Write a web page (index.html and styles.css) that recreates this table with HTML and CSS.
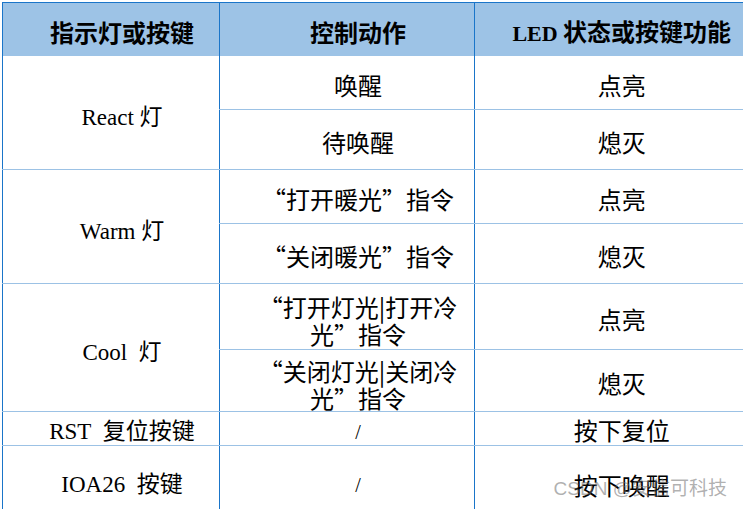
FILE: index.html
```html
<!DOCTYPE html>
<html lang="zh-CN">
<head>
<meta charset="utf-8">
<title>指示灯或按键</title>
<link rel="stylesheet" href="styles.css">
</head>
<body>
<div class="page">
  <table class="grid">
    <colgroup>
      <col class="c1"><col class="c2"><col class="c3">
    </colgroup>
    <thead>
      <tr class="head">
        <th class="sh">指示灯或按键</th>
        <th class="sh">控制动作</th>
        <th><span class="lat">LED</span> 状态或按键功能</th>
      </tr>
    </thead>
    <tbody>
      <tr class="r1">
        <td class="name grp sh" rowspan="2"><span class="lat">React</span> 灯</td>
        <td class="sh">唤醒</td>
        <td>点亮</td>
      </tr>
      <tr class="r2">
        <td class="sh">待唤醒</td>
        <td>熄灭</td>
      </tr>
      <tr class="r3">
        <td class="name grp sh" rowspan="2"><span class="lat">Warm</span> 灯</td>
        <td class="sh">“打开暖光”指令</td>
        <td>点亮</td>
      </tr>
      <tr class="r4">
        <td class="sh">“关闭暖光”指令</td>
        <td>熄灭</td>
      </tr>
      <tr class="r5">
        <td class="name grp sh" rowspan="2"><span class="lat">Cool</span>&nbsp; 灯</td>
        <td class="two sh">“打开灯光|打开冷<br>光”指令</td>
        <td>点亮</td>
      </tr>
      <tr class="r6">
        <td class="two sh">“关闭灯光|关闭冷<br>光”指令</td>
        <td>熄灭</td>
      </tr>
      <tr class="r7">
        <td class="name sh"><span class="lat">RST</span>&nbsp; 复位按键</td>
        <td class="lat slash sh">/</td>
        <td>按下复位</td>
      </tr>
      <tr class="r8">
        <td class="name sh"><span class="lat">IOA26</span>&nbsp; 按键</td>
        <td class="lat slash sh">/</td>
        <td>按下唤醒</td>
      </tr>
    </tbody>
  </table>
  <div class="mark">CSDN @安信可科技</div>
</div>
</body>
</html>
```
FILE: styles.css
```css
html, body {
  margin: 0;
  padding: 0;
  background: #ffffff;
  overflow: hidden;
}
.page {
  position: relative;
  width: 743px;
  height: 509px;
  overflow: hidden;
  padding: 2px 0 0 2px;
  box-sizing: border-box;
  font-family: "Noto Sans CJK SC", "Liberation Sans", sans-serif;
  color: #000;
}
.grid {
  border-collapse: collapse;
  table-layout: fixed;
  width: 766px;
}
.c1 { width: 217px; }
.c2 { width: 255px; }
.c3 { width: 294px; }

.grid th, .grid td {
  padding: 4px 0 0 0;
  text-align: center;
  vertical-align: middle;
  border-left: 1px solid #1a75c9;
  border-bottom: 1px solid #9cc2e5;
  font-size: 24px;
  line-height: 26px;
  font-weight: 400;
}
.grid .sh { padding-left: 22px; }
.head th {
  background: #9dc3e6;
  font-weight: 700;
  height: 48px;
  border-top: 1px solid #1a75c9;
  border-bottom: none;
  padding-top: 5px;
}
.head .lat { font-size: 22px; }
.lat {
  font-family: "Liberation Serif", "Noto Sans CJK SC", serif;
}
.grid .name {
  font-family: "Liberation Serif", "Noto Sans CJK SC", serif;
  font-size: 23px;
}
.grid .slash { font-size: 20px; }
.grid .two { line-height: 27px; padding-top: 6px; }

.r1 td { height: 49px; }
.r2 td { height: 55px; }
.r3 td { height: 49px; }
.r4 td { height: 55px; }
.r5 td { height: 61px; }
.r6 td { height: 57px; }
.r7 td { height: 31px; padding-top: 2px; }
.r8 td { height: 62px; padding-top: 8px; }
.r5 .two { height: 59px; }
.r6 .two { height: 55px; }
.grid .grp { padding-top: 10px; }
.r7 .name, .r7 .slash { padding-top: 6px; height: 27px; }
.r8 .slash { padding-top: 8px; }

.mark {
  position: absolute;
  right: 16px;
  bottom: 10px;
  font-family: "Liberation Sans", "Noto Sans CJK SC", sans-serif;
  font-size: 19px;
  line-height: 20px;
  color: rgba(110, 110, 110, 0.55);
}
```
